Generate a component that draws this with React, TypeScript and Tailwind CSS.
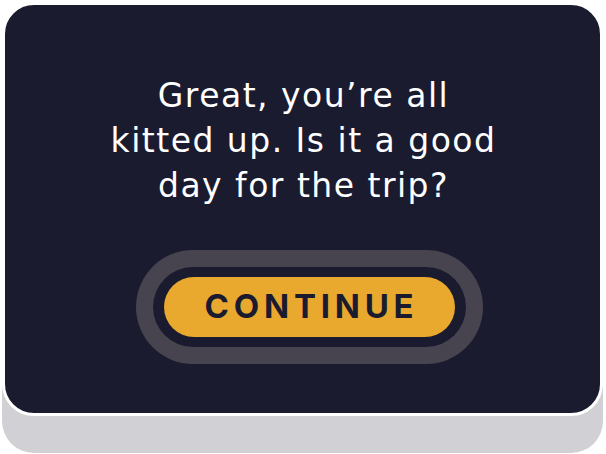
export default function App() {
  return (
    <div className="w-[606px] h-[454px] bg-white pt-[2px] pl-[2px] pr-[3px]">
      <div className="h-[414px] rounded-[32px] border-[3px] border-white bg-[#1b1b2f] shadow-[0_37px_0_#d1d0d4] flex flex-col items-center pt-[68px]">
        <h1
          className="text-white text-center text-[33px] leading-[45px] font-normal tracking-[0.045em] ml-[2px]"
          style={{ fontFamily: "'DejaVu Sans', sans-serif" }}
        >
          Great, you’re all
          <br />
          kitted up. Is it a good
          <br />
          day for the trip?
        </h1>
        <div className="mt-[42px] ml-[14px] rounded-full bg-[#48444f] p-[17px]">
          <div className="rounded-full bg-[#1b1b2f] py-[10px] px-[11px]">
            <button
              className="w-[291px] h-[60px] rounded-full bg-[#e9a82e] text-[#1b1b2f] text-[33px] font-bold tracking-[0.145em] flex items-center justify-center pl-[4px]"
              style={{ fontFamily: "Inter, 'Noto Sans', sans-serif" }}
            >
              CONTINUE
            </button>
          </div>
        </div>
      </div>
    </div>
  );
}
